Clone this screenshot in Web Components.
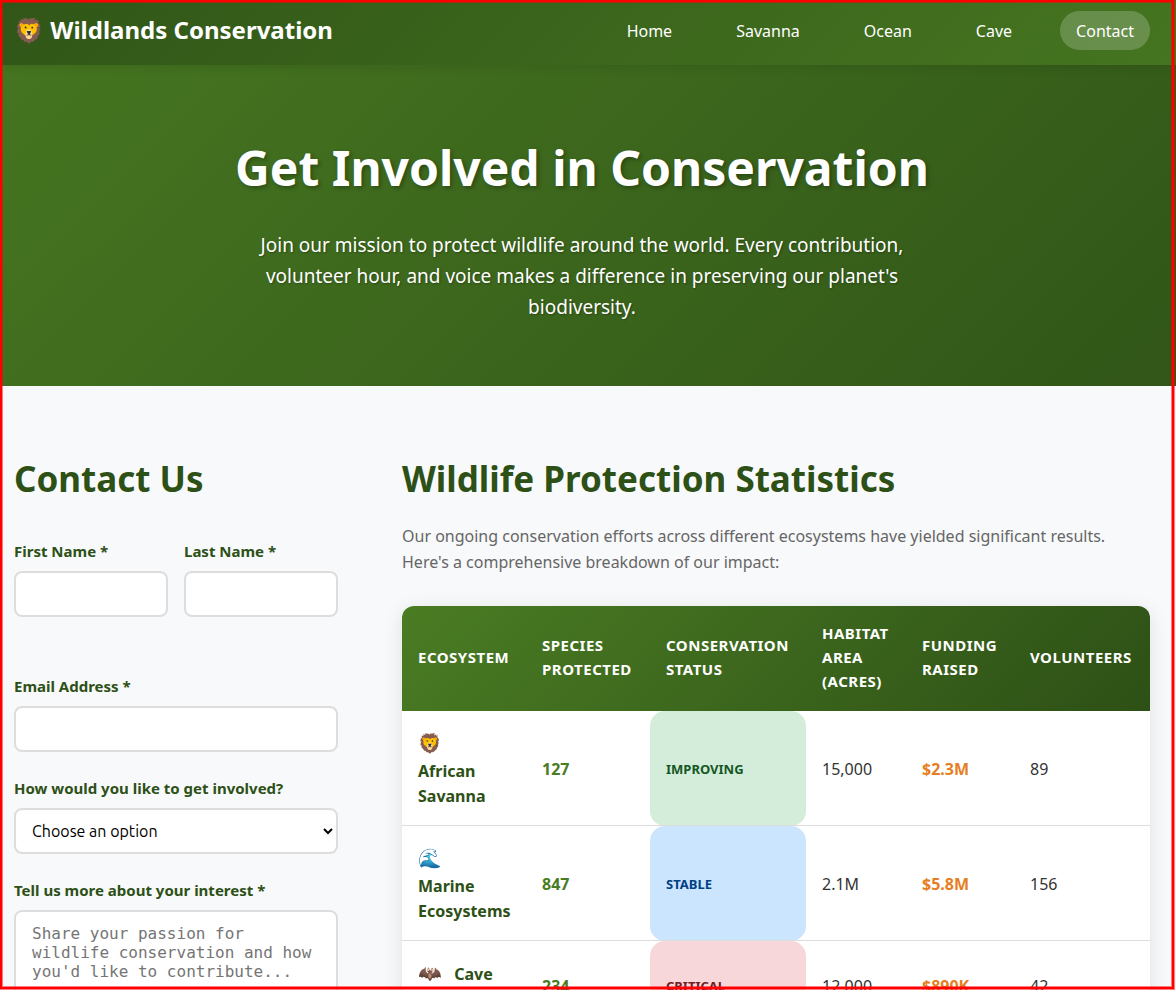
<!DOCTYPE html>
<html lang="en">
<head>
<meta charset="utf-8">
<meta name="viewport" content="width=device-width, initial-scale=1">
<title>Wildlands Conservation - Contact</title>
<style>
html { scrollbar-width: none; }
body {
  margin: 0;
  font-family: "Noto Sans", sans-serif;
  font-size: 16px;
  line-height: 26px;
  color: #333;
  background: #f8f9fb;
  --dark: #2d5016;
  --leaf: #4a7c23;
  --banner-dark: #315618;
  --banner-leaf: #457520;
  --orange: #e67e22;
  --line: #ddd;
  --pad-left: 14px;
  --pad-right: 26px;
}
</style>
</head>
<body>
<wild-page></wild-page>
<script>
function define(name, html, setup) {
  const template = document.createElement('template');
  template.innerHTML = html;
  customElements.define(name, class extends HTMLElement {
    constructor() {
      super();
      this.attachShadow({ mode: 'open' }).append(template.content.cloneNode(true));
    }
    connectedCallback() {
      if (setup) setup(this, this.shadowRoot);
    }
  });
}

define('wild-nav', `
<style>
:host { display: block; position: relative; z-index: 1; }
header {
  display: flex; justify-content: space-between; align-items: flex-start;
  padding: 11px var(--pad-right) 15px var(--pad-left);
  background: linear-gradient(135deg, var(--banner-dark), var(--banner-leaf));
  box-shadow: 0 2px 10px rgba(0,0,0,.1);
}
.brand { color: #fff; font-size: 24px; line-height: 38px; font-weight: 700; text-decoration: none; white-space: nowrap; }
nav { display: flex; gap: 32px; }
nav a { color: #fff; text-decoration: none; padding: 7px 16px 6px; border-radius: 25px; }
nav a[aria-current] { background: rgba(255,255,255,.2); }
</style>
<header>
  <a class="brand" href="#">🦁 Wildlands Conservation</a>
  <nav>
    <a href="#home">Home</a><a href="#savanna">Savanna</a><a href="#ocean">Ocean</a><a href="#cave">Cave</a><a href="#contact" aria-current="page">Contact</a>
  </nav>
</header>`);

define('wild-hero', `
<style>
:host {
  display: block; text-align: center; color: #fff;
  padding: 64px var(--pad-right) 63px var(--pad-left);
  background: linear-gradient(135deg, var(--banner-leaf), var(--banner-dark));
}
h1 { margin: 0 0 24px; font-size: 48px; line-height: 77px; text-shadow: 2px 2px 4px rgba(0,0,0,.3); }
p { max-width: 700px; margin: 0 auto; font-size: 19px; line-height: 31px; text-shadow: 1px 1px 2px rgba(0,0,0,.3); }
</style>
<h1><slot name="title"></slot></h1>
<p><slot></slot></p>`);

define('wild-contact-form', `
<style>
:host { display: block; }
h2 { margin: 0 0 32px; font-size: 35px; line-height: 57px; color: var(--dark); }
form { display: grid; gap: 24px; }
.names { display: grid; grid-template-columns: 1fr 1fr; gap: 16px; margin-bottom: 33px; }
.field { display: grid; gap: 8px; }
label { font-size: 15px; line-height: 24px; font-weight: 700; color: var(--dark); }
input, select, textarea {
  box-sizing: border-box; width: 100%; min-width: 0; margin: 0;
  border: 2px solid var(--line); border-radius: 8px; background: #fff; font-size: 16px;
}
input, select { height: 46px; font-family: Ubuntu, "Noto Sans", sans-serif; }
input { padding: 12px 16px; }
select { padding: 10px 12px; color: #000; }
textarea { display: block; height: 120px; padding: 12px 16px; font-family: "DejaVu Sans Mono", monospace; line-height: 19px; resize: vertical; }
</style>
<h2>Contact Us</h2>
<form>
  <div class="names">
    <div class="field"><label for="first">First Name *</label><input id="first" required></div>
    <div class="field"><label for="last">Last Name *</label><input id="last" required></div>
  </div>
  <div class="field"><label for="email">Email Address *</label><input id="email" type="email" required></div>
  <div class="field"><label for="how">How would you like to get involved?</label>
    <select id="how"><option>Choose an option</option></select></div>
  <div class="field"><label for="more">Tell us more about your interest *</label>
    <textarea id="more" placeholder="Share your passion for wildlife conservation and how you'd like to contribute..." required></textarea></div>
</form>`);

define('wild-stats', `
<style>
:host { display: block; }
h2 { margin: 0 0 16px; font-size: 35px; line-height: 57px; color: var(--dark); }
p { margin: 0 0 31px; color: #666; }
table {
  width: 100%; table-layout: fixed; border-collapse: collapse; background: #fff;
  border-radius: 12px; overflow: hidden; box-shadow: 0 4px 20px rgba(0,0,0,.1);
}
.c-name, .c-species { width: 124px; }
.c-status { width: 156px; }
.c-area { width: 100px; }
.c-funding { width: 108px; }
.c-people { width: 136px; }
thead { background: linear-gradient(135deg, var(--leaf), var(--dark)); color: #fff; }
th { text-align: left; }
thead th { padding: 15px 16px 18px; font-size: 15px; line-height: 24px; font-weight: 700; letter-spacing: .5px; text-transform: uppercase; }
tbody tr { border-bottom: 1px solid var(--line); }
tbody td, tbody th { padding: 17px 16px 16px; }
tbody th { color: var(--dark); font-weight: 700; line-height: 25px; }
.icon { font-size: 19px; line-height: 31px; margin-right: 8px; }
.count { color: var(--leaf); font-weight: 700; }
.money { color: var(--orange); font-weight: 700; }
.status { border-radius: 15px; font-size: 13px; font-weight: 700; text-transform: uppercase; }
.improving { background: #d4edda; color: #155724; }
.stable { background: #cce5ff; color: #004085; }
.critical { background: #f8d7da; color: #721c24; }
</style>
<h2>Wildlife Protection Statistics</h2>
<p>Our ongoing conservation efforts across different ecosystems have yielded significant results. Here's a comprehensive breakdown of our impact:</p>
<table>
  <colgroup><col class="c-name"><col class="c-species"><col class="c-status"><col class="c-area"><col class="c-funding"><col class="c-people"></colgroup>
  <thead><tr><th scope="col">Ecosystem</th><th scope="col">Species Protected</th><th scope="col">Conservation Status</th><th scope="col">Habitat Area (acres)</th><th scope="col">Funding Raised</th><th scope="col">Volunteers</th></tr></thead>
  <tbody></tbody>
</table>`, (host, root) => {
  const rows = [
    ['🦁', 'African Savanna', '127', 'Improving', '15,000', '$2.3M', '89'],
    ['🌊', 'Marine Ecosystems', '847', 'Stable', '2.1M', '$5.8M', '156'],
    ['🦇', 'Cave Systems', '234', 'Critical', '12,000', '$890K', '42']
  ];
  root.querySelector('tbody').innerHTML = rows.map(([icon, name, species, status, area, money, people]) => `
    <tr><th scope="row"><span class="icon">${icon}</span> ${name}</th>
    <td class="count">${species}</td><td class="status ${status.toLowerCase()}">${status}</td>
    <td>${area}</td><td class="money">${money}</td><td>${people}</td></tr>`).join('');
});

define('wild-frame', `
<style>
:host {
  position: fixed; inset: 0 2px 1px 0; z-index: 9; pointer-events: none;
  border: 2px solid #f00;
  box-shadow: 0 0 0 1px rgba(255,0,0,.5), inset 0 0 0 1px rgba(255,0,0,.5);
}
</style>`);

define('wild-page', `
<style>
:host { display: block; }
main {
  display: grid; grid-template-columns: minmax(0, 324fr) minmax(0, 748fr); gap: 64px;
  padding: 64px var(--pad-right) 64px var(--pad-left);
}
</style>
<wild-nav></wild-nav>
<wild-hero><span slot="title">Get Involved in Conservation</span>Join our mission to protect wildlife around the world. Every contribution, volunteer hour, and voice makes a difference in preserving our planet's biodiversity.</wild-hero>
<main>
  <wild-contact-form></wild-contact-form>
  <wild-stats></wild-stats>
</main>
<wild-frame></wild-frame>`);
</script>
</body>
</html>
